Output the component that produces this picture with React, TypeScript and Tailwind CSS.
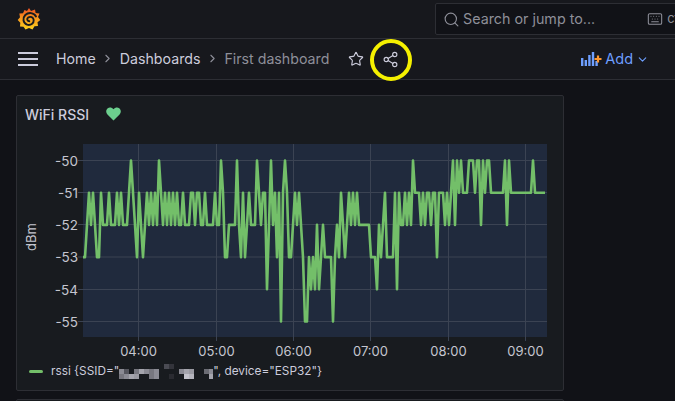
import React from 'react';
import { ChevronDown, ChevronRight, Keyboard, Search, Share2, Star } from 'lucide-react';

// one digit per 2px of plot width, digit = how far below -50 dBm
const RSSI_SAMPLES = [
  '3321212331', '2221222121', '2221012312', '3212121201', '2121212122', '1222112112',
  '2122221220', '1332222023', '1321222012', '1142021315', '1013321212', '3553434243',
  '2333353231', '2321212122', '2222333423', '2133331412', '2121201112', '1211211311',
  '1212102010', '1110001002', '0100111111', '1020111111', '1111101111', '11',
].join('');

const yTicks = [
  { label: '-50', y: 160.5 },
  { label: '-51', y: 192.5 },
  { label: '-52', y: 224.5 },
  { label: '-53', y: 257 },
  { label: '-54', y: 289.5 },
  { label: '-55', y: 321.5 },
];

const xTicks = [
  { label: '04:00', x: 138.5 },
  { label: '05:00', x: 216.5 },
  { label: '06:00', x: 293.5 },
  { label: '07:00', x: 370.5 },
  { label: '08:00', x: 448.5 },
  { label: '09:00', x: 525.5 },
];

const rssiPoints = RSSI_SAMPLES.split('')
  .map((d, i) => `${83 + i * 2},${160.5 + Number(d) * 32.2}`)
  .join(' ');

const mosaic = [
  [9, 0, '#4a4b53'], [10, 0, '#33343b'],
  [0, 1, '#8b8b94'], [1, 1, '#55565e'], [3, 1, '#77777f'], [4, 1, '#a5a5ad'], [5, 1, '#8b8b94'], [6, 1, '#77777f'], [7, 1, '#8b8b94'],
  [0, 2, '#77777f'], [1, 2, '#8b8b94'], [2, 2, '#a5a5ad'], [3, 2, '#9a9aa2'], [6, 2, '#77777f'], [7, 2, '#8b8b94'],
  [10, 2, '#2a2b31'], [12, 1, '#8b8b94'], [13, 1, '#a5a5ad'], [14, 1, '#9a9aa2'], [13, 2, '#c4c4cc'], [14, 2, '#b5b5bd'],
  [17, 1, '#6b6c74'], [18, 1, '#8b8b94'], [18, 2, '#a5a5ad'],
] as const;

function GrafanaLogo() {
  return (
    <svg width="24" height="24" viewBox="0 0 24 24">
      <defs>
        <linearGradient id="logoFill" x1="0" y1="1" x2="0" y2="0">
          <stop offset="0" stopColor="#fcd11d" />
          <stop offset="0.55" stopColor="#f7941d" />
          <stop offset="1" stopColor="#ef4f23" />
        </linearGradient>
      </defs>
      <path
        d="M12 1 L14 4 L18 2.5 L18.6 6 L22.5 6.5 L21 10 L23.3 13 L20.5 15.3 L21 19 L17.5 19.3 L15.5 22.5 L12 21 L8.5 22.5 L6.5 19.8 L3 19.5 L3.3 15.8 L.7 13 L3 10.3 L2.3 6.6 L6 6.2 L7.5 3 L10 4 Z"
        fill="url(#logoFill)"
      />
      <path
        d="M19 9.5 C17 5.5 11.5 5 8.3 8 C5.3 11 6 16.3 10 17.6 C13.6 18.8 17 16.3 16.7 13 C16.5 10.4 13.4 9 11.2 10.5 C9.6 11.7 10 14 12.3 14.3"
        fill="none"
        stroke="#181b1f"
        strokeWidth="1.9"
        strokeLinecap="round"
      />
    </svg>
  );
}

function AddIcon() {
  return (
    <svg width="22" height="14" viewBox="0 0 22 14" className="shrink-0">
      <g fill="#6e9fff">
        <rect x="0" y="6" width="2.4" height="8" />
        <rect x="3.6" y="8" width="2.4" height="6" />
        <rect x="7.2" y="3" width="2.4" height="11" />
        <rect x="10.8" y="0" width="2.4" height="14" />
        <rect x="14.4" y="9" width="2.4" height="5" />
      </g>
      <path d="M17 3.5v7M13.5 7h7" stroke="#ff9830" strokeWidth="2.2" />
    </svg>
  );
}

function RssiChart() {
  return (
    <svg viewBox="17 130 546 230" className="block h-[230px] w-[546px]">
      <rect x="83" y="144" width="464" height="193" fill="#202a3d" />
      {yTicks.map((t) => (
        <g key={t.label}>
          <line x1="78" x2="547" y1={t.y} y2={t.y} stroke="#3b4353" strokeWidth="1" />
          <text x="78" y={t.y + 5} textAnchor="end" fill="#c5c6d0" fontSize="13.5" fontFamily="Inter, sans-serif">
            {t.label}
          </text>
        </g>
      ))}
      {xTicks.map((t) => (
        <g key={t.label}>
          <line x1={t.x} x2={t.x} y1="144" y2="341" stroke="#3b4353" strokeWidth="1" />
          <text x={t.x} y="356" textAnchor="middle" fill="#c5c6d0" fontSize="13" fontFamily="Inter, sans-serif">
            {t.label}
          </text>
        </g>
      ))}
      <text
        x="0"
        y="0"
        transform="translate(36 237) rotate(-90)"
        textAnchor="middle"
        fill="#c5c6d0"
        fontSize="13"
        fontFamily="Inter, sans-serif"
      >
        dBm
      </text>
      <polyline points={rssiPoints} fill="none" stroke="#73bf69" strokeWidth="2.6" strokeLinejoin="round" />
    </svg>
  );
}

function Mosaic() {
  return (
    <svg width="94" height="15" viewBox="0 0 94 15" className="inline-block shrink-0 align-middle">
      {mosaic.map(([col, row, fill], i) => (
        <rect key={i} x={col * 5} y={row * 5} width="5" height="5" fill={fill} />
      ))}
    </svg>
  );
}

export default function App() {
  return (
    <div className="relative flex h-[401px] w-[675px] flex-col overflow-hidden bg-[#111217] font-['Inter',sans-serif] text-[#ccccdc]">
      {/* Top bar */}
      <header className="flex h-[39px] shrink-0 items-center justify-between border-b border-[#2d2e34] bg-[#17181d] pl-[17px]">
        <GrafanaLogo />
        <div className="-mr-[20px] flex h-[32px] w-[260px] shrink-0 items-center overflow-hidden rounded-[2px] border border-[#2d2e34] bg-[#111217] pl-[7px] text-[14.3px] text-[#8e8f99]">
          <Search size={17} strokeWidth={1.6} className="mr-[3px] shrink-0" />
          <span className="whitespace-nowrap">Search or jump to...</span>
          <Keyboard size={16} strokeWidth={1.6} className="ml-[52px] shrink-0" />
          <span className="ml-[4px] text-[13px]">ctrl+k</span>
        </div>
      </header>

      {/* Toolbar */}
      <nav className="flex h-[41px] shrink-0 items-center border-b border-[#2d2e34] bg-[#17181d] pl-[18px]">
        <div className="flex w-[20px] shrink-0 flex-col gap-[4px]">
          <span className="h-[2px] bg-[#ccccdc]" />
          <span className="h-[2px] bg-[#ccccdc]" />
          <span className="h-[2px] bg-[#ccccdc]" />
        </div>
        <div className="ml-[18px] flex shrink-0 items-center whitespace-nowrap text-[14.2px]">
          <span>Home</span>
          <ChevronRight size={13} className="mx-[5.5px] text-[#8e8f99]" />
          <span>Dashboards</span>
          <ChevronRight size={13} className="mx-[5.5px] text-[#8e8f99]" />
          <span className="text-[#8e8f99]">First dashboard</span>
        </div>
        <Star size={16} strokeWidth={1.7} className="ml-[19px] shrink-0" />
        <Share2 size={17} strokeWidth={1.6} className="ml-[18px] shrink-0" />
        <div className="ml-[182px] flex shrink-0 items-center text-[14.5px] text-[#6e9fff]">
          <AddIcon />
          <span className="ml-[2px]">Add</span>
          <ChevronDown size={13} className="ml-[3px]" />
        </div>
        <span className="ml-[26px] h-[10px] w-[2px] shrink-0 bg-[#55565e]" />
      </nav>

      {/* Dashboard */}
      <main className="flex flex-col gap-[8px] pl-[16px] pt-[15px]">
        <section className="h-[296px] w-[548px] shrink-0 rounded-[2px] border border-[#2d2e34] bg-[#181b1f]">
          <div className="flex h-[34px] items-center pl-[8px] pt-[2px]">
            <h2 className="text-[14px] font-medium">WiFi RSSI</h2>
            <svg width="15" height="14" viewBox="0 0 24 22" className="ml-[17px]">
              <path
                d="M12 21.5 L2.3 11.6 C-.6 8.6 -.2 4 2.8 1.8 C5.8 -.3 9.6 .6 12 3.5 C14.4 .6 18.2 -.3 21.2 1.8 C24.2 4 24.6 8.6 21.7 11.6 Z"
                fill="#6ccf8e"
              />
            </svg>
          </div>
          <RssiChart />
          <div className="flex h-[29px] items-center whitespace-nowrap pb-[6px] pl-[12px] text-[11.8px]">
            <span className="h-[3px] w-[14px] rounded-full bg-[#73bf69]" />
            <span className="ml-[8px] flex items-center">
              rssi {'{'}SSID="
              <Mosaic />
              ", device="ESP32"{'}'}
            </span>
          </div>
        </section>
        <section className="h-[40px] w-[548px] shrink-0 rounded-[2px] border border-[#2d2e34] bg-[#181b1f]" />
      </main>

      {/* Hand-drawn highlight around the share button */}
      <span className="absolute left-[370px] top-[39px] h-[42px] w-[42px] rounded-full border-[4px] border-[#f5f000]" />
    </div>
  );
}
